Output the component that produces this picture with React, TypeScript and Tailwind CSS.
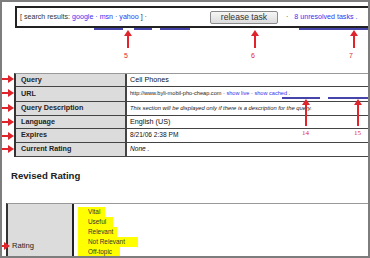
import React from "react";

const RED = "#e0242c";

function RightArrow({ top, left, width }: { top: number; left: number; width: number }) {
  return (
    <svg className="absolute" style={{ top: top - 4, left }} width={width} height={8} viewBox={`0 0 ${width} 8`}>
      <rect x={0} y={3} width={width - 5} height={2} fill={RED} />
      <polygon points={`${width - 6},0 ${width},4 ${width - 6},8`} fill={RED} />
    </svg>
  );
}

function UpArrow({ x, top, height }: { x: number; top: number; height: number }) {
  return (
    <svg className="absolute" style={{ top, left: x - 4 }} width={8} height={height} viewBox={`0 0 8 ${height}`}>
      <polygon points="4,0 8,6 0,6" fill={RED} />
      <rect x={3} y={5} width={2} height={height - 5} fill={RED} />
    </svg>
  );
}

function Bar({ x1, x2, y }: { x1: number; x2: number; y: number }) {
  return <div className="absolute h-[2px] bg-[#4444aa]" style={{ top: y, left: x1, width: x2 - x1 }} />;
}

const rows: { label: string; value: React.ReactNode; h: number }[] = [
  { label: "Query", value: <span className="text-[7.2px] text-[#111]">Cell Phones</span>, h: 13 },
  {
    label: "URL",
    value: (
      <span className="text-[5.6px] text-[#222]">
        http://www.byli-mobil-pho-cheap.com · <span className="text-[#3333ee]">show live</span> ·{" "}
        <span className="text-[#3333ee]">show cached</span> .
      </span>
    ),
    h: 15,
  },
  {
    label: "Query Description",
    value: (
      <span className="text-[5.8px] italic text-[#222]">
        This section will be displayed only if there is a description for the query.
      </span>
    ),
    h: 14,
  },
  { label: "Language", value: <span className="text-[7.2px] text-[#111]">English (US)</span>, h: 13 },
  { label: "Expires", value: <span className="text-[6.6px] text-[#111]">8/21/06 2:38 PM</span>, h: 14 },
  { label: "Current Rating", value: <span className="text-[6.6px] italic text-[#111]">None .</span>, h: 14 },
];

const options = [
  { t: "Vital", w: 27 },
  { t: "Useful", w: 35 },
  { t: "Relevant", w: 39 },
  { t: "Not Relevant", w: 60 },
  { t: "Off-topic", w: 42 },
];

export default function App() {
  return (
    <div
      className="relative w-[370px] h-[258px] overflow-hidden border-2 border-[#7d7d7d] bg-white"
      style={{ fontFamily: '"Liberation Sans", Arial, sans-serif' }}
    >
      {/* top box */}
      <div className="mt-[4px] ml-[13px] w-[370px] h-[22px] border-t-2 border-l-2 border-b-2 border-[#222] flex items-center pl-[3px] text-[7.1px] text-[#333]">
        <span>
          [ search results: <span className="text-[#3333ee]">google · msn · yahoo</span> ] ·
        </span>
        <button className="ml-[63px] w-[68px] h-[13px] rounded-[2px] border border-[#8a8a8a] bg-gradient-to-b from-[#f6f6f6] to-[#dcdcdc] text-[8.6px] text-[#333] leading-none">
          release task
        </button>
        <span className="ml-[8px]">·</span>
        <span className="ml-[6px] text-[#3333ee]">8 unresolved tasks .</span>
      </div>

      {/* table 1 */}
      <div className="mt-[45px] ml-[12px] w-[354px] border-t border-[#999] border-l-2 border-l-[#333]">
        {rows.map((r) => (
          <div key={r.label} className="flex border-b border-[#444]" style={{ height: r.h }}>
            <div className="w-[111px] shrink-0 bg-[#dcdcdc] border-r-2 border-[#444] flex items-center pl-[5px] text-[7.2px] font-bold text-[#222]">
              {r.label}
            </div>
            <div className="flex-1 flex items-center pl-[3px] leading-none">{r.value}</div>
          </div>
        ))}
      </div>

      {/* heading */}
      <div className="mt-[13px] ml-[9px] h-[12px] flex items-center text-[9.6px] font-bold text-[#222]">Revised Rating</div>

      {/* table 2 */}
      <div className="mt-[21px] ml-[4px] h-[60px] flex border-t border-[#999] border-l-2 border-l-[#333]">
        <div className="w-[66px] shrink-0 bg-[#dcdcdc] border-r-2 border-[#222] flex items-end pl-[4px] pb-[12px] text-[7.6px] text-[#222]">
          Rating
        </div>
        <div className="flex flex-col pl-[4px] pt-[3px]">
          {options.map((o) => (
            <div key={o.t} className="h-[10px] bg-[#ffff00] flex items-center pl-[10px] text-[6.4px] text-[#333]" style={{ width: o.w }}>
              {o.t}
            </div>
          ))}
        </div>
      </div>

      {/* annotations */}
      <Bar x1={92} x2={121} y={26} />
      <Bar x1={132} x2={150} y={26} />
      <Bar x1={158} x2={188} y={26} />
      <Bar x1={297} x2={366} y={26} />
      <UpArrow x={126} top={28} height={18} />
      <UpArrow x={253} top={28} height={18} />
      <UpArrow x={352} top={28} height={18} />
      <div className="absolute top-[49px] left-[122px] text-[7px] text-[#e0242c]">5</div>
      <div className="absolute top-[49px] left-[249px] text-[7px] text-[#e0242c]">6</div>
      <div className="absolute top-[49px] left-[347px] text-[7px] text-[#e0242c]">7</div>

      <Bar x1={280} x2={318} y={95} />
      <Bar x1={326} x2={370} y={95} />
      <UpArrow x={304} top={97} height={27} />
      <UpArrow x={356} top={97} height={27} />
      <div className="absolute top-[126px] left-[300px] text-[7px] text-[#e0242c]" style={{ fontFamily: '"Liberation Serif", serif' }}>14</div>
      <div className="absolute top-[126px] left-[352px] text-[7px] text-[#e0242c]" style={{ fontFamily: '"Liberation Serif", serif' }}>15</div>

      <RightArrow top={77} left={-2} width={14} />
      <RightArrow top={91} left={-2} width={14} />
      <RightArrow top={106} left={-2} width={14} />
      <RightArrow top={120} left={-2} width={14} />
      <RightArrow top={134} left={-2} width={14} />
      <RightArrow top={147} left={-2} width={14} />
      <RightArrow top={244} left={-2} width={10} />
    </div>
  );
}
